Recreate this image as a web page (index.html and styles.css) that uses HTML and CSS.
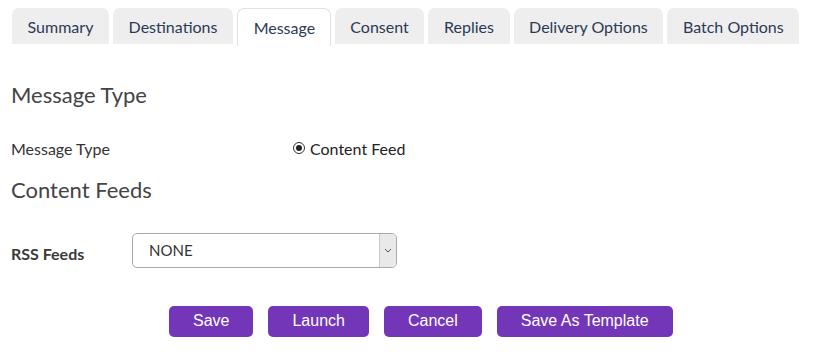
FILE: index.html
```html
<html>
<head>
<meta charset="utf-8">
<title>Message</title>
<link rel="stylesheet" href="styles.css">
</head>
<body>
	<div id="tabs">
		<div class="tab">Summary</div>
		<div class="tab">Destinations</div>
		<div class="tab active">Message</div>
		<div class="tab">Consent</div>
		<div class="tab">Replies</div>
		<div class="tab">Delivery Options</div>
		<div class="tab">Batch Options</div>
	</div>

	<div id="content">
		<h3 class="section">Message Type</h3>
		<div class="row">
			<div class="label">Message Type</div>
			<div class="radio"><span class="dot"></span>Content Feed</div>
		</div>
		<h3 class="section feeds">Content Feeds</h3>
		<div class="row rss">
			<div class="label bold">RSS Feeds</div>
			<div class="select">
				<span class="value">NONE</span>
				<span class="arrow">
					<svg width="8" height="5" viewBox="0 0 8 5"><path d="M1 1 L4 4 L7 1" fill="none" stroke="#555" stroke-width="1"/></svg>
				</span>
			</div>
		</div>
		<div id="btns">
			<div class="btn">Save</div>
			<div class="btn">Launch</div>
			<div class="btn">Cancel</div>
			<div class="btn">Save As Template</div>
		</div>
	</div>
</body>
</html>
```
FILE: styles.css
```css
html,body{
	margin: 0px;
	padding: 0px;
}

body{
	background-color: #FFF;
	font-family: Lato, "Open Sans", sans-serif;
	color: #333;
}

#tabs{
	display: flex;
	gap: 4px;
	padding: 8px 0px 0px 12px;
	height: 36px;
}

.tab{
	box-sizing: border-box;
	height: 36px;
	padding: 0px 15.6px;
	line-height: 37px;
	font-size: 16px;
	color: #2b3a55;
	background-color: #EEE;
	border-radius: 7px 7px 0px 0px;
}

.tab.active{
	height: 38px;
	background-color: #FFF;
	border: 1px solid #E2E2E2;
	border-bottom: none;
	line-height: 37px;
	padding: 0px 14.6px 0px 15.6px;
}

#content{
	padding: 0px 11px;
}

h3.section{
	margin: 0px;
	font-size: 22px;
	font-weight: normal;
	color: #444;
	padding-top: 38px;
	line-height: 26px;
}

h3.feeds{
	padding-top: 19px;
}

.row{
	display: flex;
	align-items: center;
	font-size: 16px;
	margin-top: 30px;
	height: 20px;
}

.label{
	width: 282px;
}

.radio{
	display: flex;
	align-items: center;
	font-size: 16px;
	color: #222;
}

.dot{
	box-sizing: border-box;
	width: 12px;
	height: 12px;
	border: 1px solid #333;
	border-radius: 50%;
	margin-right: 5px;
	position: relative;
}

.dot::after{
	content: "";
	position: absolute;
	left: 2px;
	top: 2px;
	width: 6px;
	height: 6px;
	border-radius: 50%;
	background-color: #222;
}

.rss{
	margin-top: 30px;
	height: 34px;
}

.label.bold{
	width: 121px;
	font-weight: bold;
	color: #3a3a3a;
	padding-top: 6px;
}

.select{
	box-sizing: border-box;
	width: 265px;
	height: 35px;
	border: 1px solid #AAA;
	border-radius: 5px;
	display: flex;
	align-items: center;
	justify-content: space-between;
	overflow: hidden;
}

.value{
	padding-left: 16px;
	font-size: 15px;
	color: #333;
}

.arrow{
	width: 16px;
	height: 100%;
	background-color: #E9E9E9;
	border-left: 1px solid #C8C8C8;
	display: flex;
	align-items: center;
	justify-content: center;
}

#btns{
	display: flex;
	gap: 15px;
	padding-left: 158px;
	margin-top: 39px;
}

.btn{
	height: 31px;
	line-height: 30px;
	padding: 0px 24px;
	font-family: "Liberation Sans", Arial, sans-serif;
	font-size: 16px;
	color: #FFF;
	background-color: #7336B8;
	border-radius: 5px;
	text-align: center;
}
```
